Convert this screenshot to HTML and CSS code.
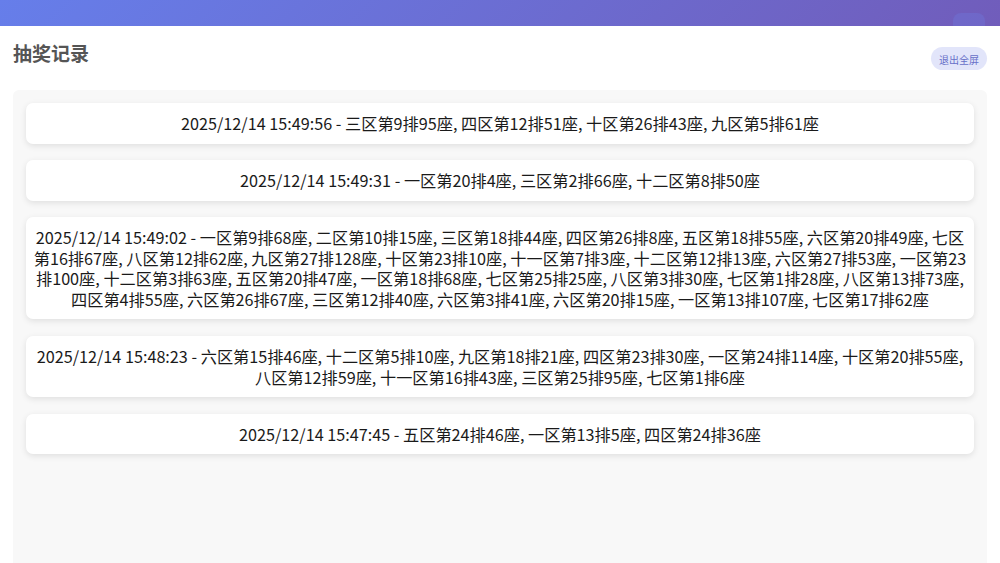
FILE: index.html
```html
<!DOCTYPE html>
<html lang="zh-CN">

<head>
  <meta charset="UTF-8">
  <meta name="viewport" content="width=device-width, initial-scale=1.0">
  <title>抽奖记录</title>
  <link rel="stylesheet" href="styles.css">
</head>

<body>
  <div class="top-bar">
    <div class="top-btn"></div>
  </div>

  <div class="records-panel">
    <div class="records-header">
      <h2>抽奖记录</h2>
      <button class="exit-btn">退出全屏</button>
    </div>

    <div class="records-list">
      <div class="record-item">2025/12/14 15:49:56 - 三区第9排95座, 四区第12排51座, 十区第26排43座, 九区第5排61座</div>
      <div class="record-item">2025/12/14 15:49:31 - 一区第20排4座, 三区第2排66座, 十二区第8排50座</div>
      <div class="record-item">2025/12/14 15:49:02 - 一区第9排68座, 二区第10排15座, 三区第18排44座, 四区第26排8座, 五区第18排55座, 六区第20排49座, 七区第16排67座, 八区第12排62座, 九区第27排128座, 十区第23排10座, 十一区第7排3座, 十二区第12排13座, 六区第27排53座, 一区第23排100座, 十二区第3排63座, 五区第20排47座, 一区第18排68座, 七区第25排25座, 八区第3排30座, 七区第1排28座, 八区第13排73座, 四区第4排55座, 六区第26排67座, 三区第12排40座, 六区第3排41座, 六区第20排15座, 一区第13排107座, 七区第17排62座</div>
      <div class="record-item">2025/12/14 15:48:23 - 六区第15排46座, 十二区第5排10座, 九区第18排21座, 四区第23排30座, 一区第24排114座, 十区第20排55座, 八区第12排59座, 十一区第16排43座, 三区第25排95座, 七区第1排6座</div>
      <div class="record-item">2025/12/14 15:47:45 - 五区第24排46座, 一区第13排5座, 四区第24排36座</div>
    </div>
  </div>
</body>

</html>
```

FILE: styles.css
```css
body {
  margin: 0;
  font-family: "Noto Sans CJK SC", sans-serif;
  background: linear-gradient(135deg, #667eea 0%, #764ba2 100%);
  height: 100vh;
  overflow: hidden;
  display: flex;
  flex-direction: column;
}

.top-bar {
  height: 26px;
  position: relative;
}

.top-btn {
  position: absolute;
  right: 15px;
  top: 13px;
  width: 32px;
  height: 20px;
  border-radius: 8px;
  background: rgba(110, 150, 255, 0.18);
}

.records-panel {
  flex: 1;
  background: #fff;
  padding: 0 13px;
  position: relative;
  z-index: 1;
  display: flex;
  flex-direction: column;
}

.records-header {
  display: flex;
  justify-content: space-between;
  align-items: center;
  height: 64px;
}

.records-header h2 {
  margin: 0;
  font-size: 19px;
  font-weight: bold;
  color: #555;
  position: relative;
  top: -6px;
}

.exit-btn {
  font-family: inherit;
  border: none;
  border-radius: 12px;
  background: #e2e5fa;
  color: #6870c8;
  font-size: 10px;
  padding: 5px 8px;
  height: 23px;
  cursor: pointer;
}

.records-list {
  flex: 1;
  background: #f8f8f8;
  border-radius: 6px 6px 0 0;
  padding: 13px 13px;
  display: flex;
  flex-direction: column;
  gap: 16.7px;
}

.record-item {
  background: #fff;
  border-radius: 7px;
  box-shadow: 0 2px 6px rgba(0, 0, 0, 0.1);
  padding: 10px 2px;
  text-align: center;
  font-size: 16.2px;
  line-height: 20.5px;
  color: #1a1a1a;
}
```
